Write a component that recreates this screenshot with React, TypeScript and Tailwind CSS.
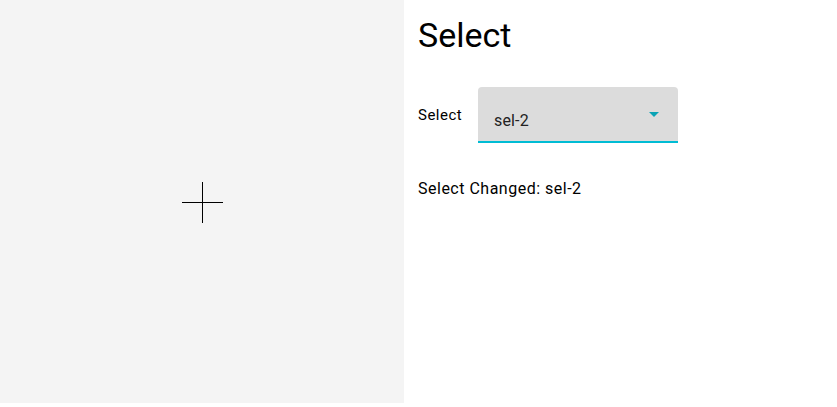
import React from "react";

export default function App() {
  return (
    <div className="flex w-[837px] h-[407px] bg-white" style={{ fontFamily: "Roboto, sans-serif" }}>
      <div className="w-[404px] h-[403px] bg-[#f4f4f4] flex items-center justify-center shrink-0">
        <svg width="41" height="41" viewBox="0 0 41 41" className="ml-[1px] mt-[1px]">
          <line x1="0" y1="20.5" x2="41" y2="20.5" stroke="#000" strokeWidth="1" />
          <line x1="20.5" y1="0" x2="20.5" y2="41" stroke="#000" strokeWidth="1" />
        </svg>
      </div>
      <div className="flex-1 pl-[14px] pt-[13px] text-black">
        <h1 className="text-[34px] leading-[44px] font-normal">Select</h1>
        <div className="flex items-start mt-[30px]">
          <span className="text-[15px] leading-[20px] tracking-[0.5px] mt-[18px] w-[60px]">Select</span>
          <div className="w-[200px] h-[56px] bg-[#dcdcdc] rounded-t-[4px] border-b-2 border-[#00bcd4] flex items-start pl-[16px] pr-[19px] box-border">
            <span className="text-[16px] leading-[24px] tracking-[0.15px] text-[#222] flex-1 mt-[22px]">sel-2</span>
            <svg width="10" height="5" viewBox="0 0 10 5" className="mt-[25px]">
              <path d="M0 0 L10 0 L5 5 Z" fill="#0aa3b5" />
            </svg>
          </div>
        </div>
        <div className="mt-[36px] text-[16px] leading-[20px] tracking-[0.5px]">Select Changed: sel-2</div>
      </div>
    </div>
  );
}
